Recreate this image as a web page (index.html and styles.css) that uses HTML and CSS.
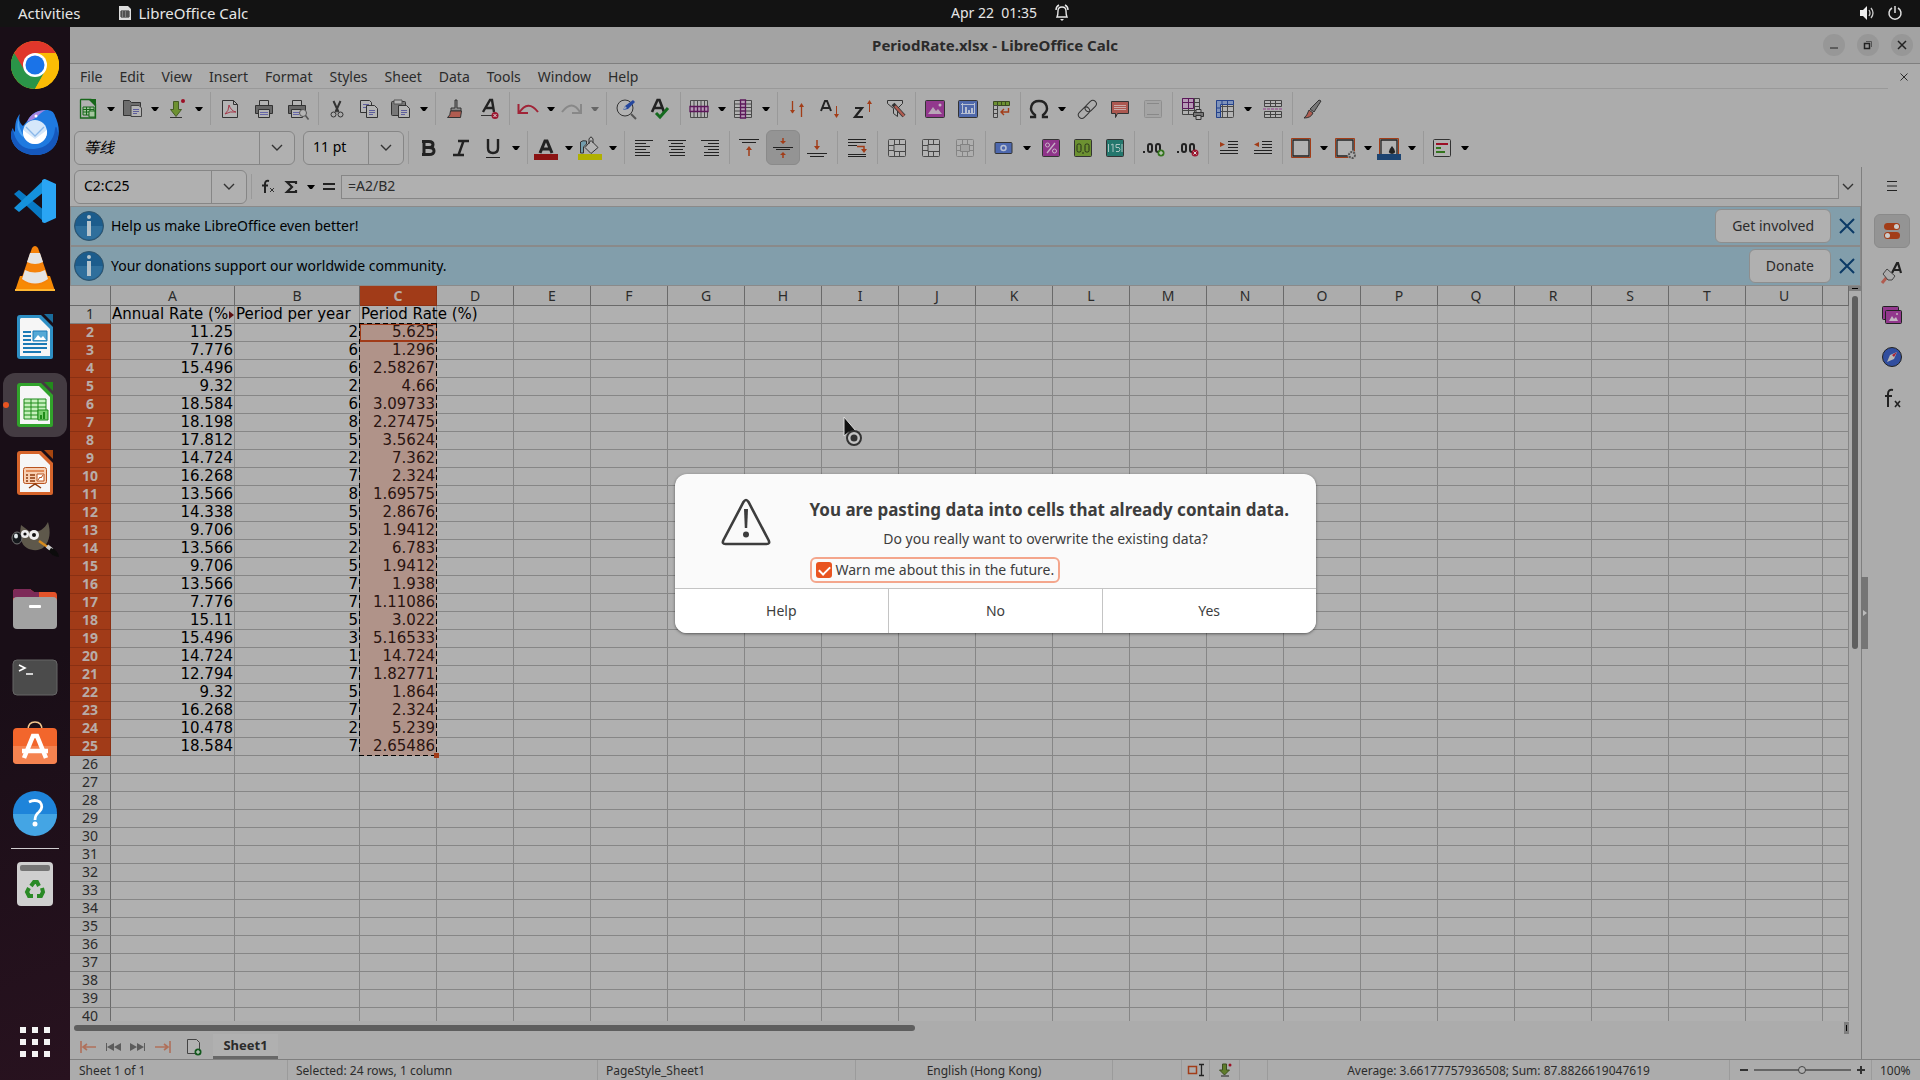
FILE: index.html
```html
<!DOCTYPE html>
<html lang="en">
<head>
<meta charset="UTF-8">
<meta name="viewport" content="width=device-width, initial-scale=1.0">
<title>PeriodRate.xlsx - LibreOffice Calc</title>
<link rel="stylesheet" href="styles.css">
</head>
<body>

<!-- shared shapes -->
<svg class="defs" aria-hidden="true">
  <symbol id="caret" viewBox="0 0 8 5"><path d="M0 0h8L5 4H3z" fill="#000"/></symbol>
  <symbol id="chevron" viewBox="0 0 12 8"><path d="M1 1l5 5 5-5" fill="none" stroke="#333" stroke-width="1.4"/></symbol>
  <symbol id="cross" viewBox="0 0 16 16"><path d="M1 1l14 14M15 1L1 15" fill="none" stroke="currentColor" stroke-width="2"/></symbol>
  <symbol id="info" viewBox="0 0 30 30"><circle cx="15" cy="15" r="14.500" fill="#1c5c8c" stroke="#31546b"/><path d="M1.500 15h27a13.500 13.500 0 0 1-27 0z" fill="#2f6f9c"/><circle cx="15" cy="6" r="2" fill="#b6c4cc"/><path d="M13 10h4v15h-4z" fill="#b6c4cc"/></symbol>
  <symbol id="grid" viewBox="0 0 24 24"><rect x="3.500" y="3.500" width="17" height="17" rx="1" fill="#b4b4b4" stroke="#4a4a4a"/><path d="M3.500 9.500h17M3.500 14.500h17M9.500 3.500v17M14.500 3.500v17" stroke="#4a4a4a" fill="none"/></symbol>
</svg>

<header class="topbar">
  <div class="topbar-left">
    <button>Activities</button>
    <button class="app-menu">
      <svg width="14" height="16" viewBox="0 0 14 16"><path d="M1 1h9l3 3v11H1z" fill="#ddd"/><path d="M3 6h8v6H3zM3 8h8M3 10h8M6 6v6M9 6v6" fill="none" stroke="#222"/></svg>
      LibreOffice Calc
    </button>
  </div>
  <button class="clock">Apr 22&nbsp; 01:35
    <svg width="16" height="18" viewBox="0 0 16 18"><path d="M3 13c1-2 1-3 1-6 0-3 2-4 4-4s4 1 4 4c0 3 0 4 1 6zM2 6c0-2 1-4 3-5M14 6c0-2-1-4-3-5" fill="none" stroke="#e8e8e8" stroke-width="1.400"/><path d="M6 15h4l-2 2z" fill="#e8e8e8"/></svg>
  </button>
  <div class="topbar-right">
    <svg width="16" height="16" viewBox="0 0 16 16"><path d="M1 5h3l4-4v14l-4-4H1z" fill="#eee"/><path d="M10 5q2 3 0 6M12 3q4 5 0 10" fill="none" stroke="#ccc" stroke-width="1.300"/></svg>
    <svg width="16" height="16" viewBox="0 0 16 16"><path d="M5 3a6 6 0 1 0 6 0M8 1v7" fill="none" stroke="#e0e0e0" stroke-width="1.500"/></svg>
  </div>
</header>

<div class="desktop">
  <nav class="dock" aria-label="Dock">
    <a href="#" aria-label="Chrome"><svg viewBox="0 0 48 48"><circle cx="24" cy="24" r="24" fill="#fbbc05"/><path d="M24 24L3.200 12A24 24 0 0 0 24 48l10-18z" fill="#2a9548"/><path d="M3.200 12A24 24 0 0 1 44.800 12H24L14 30z" fill="#e0372b"/><path d="M24 12h20.800A24 24 0 0 1 24 48l10.400-18z" fill="#fbbc05"/><circle cx="24" cy="24" r="12" fill="#fff"/><circle cx="24" cy="24" r="9.500" fill="#1a73e8"/></svg></a>
    <a href="#" aria-label="Thunderbird"><svg viewBox="0 0 48 48"><path d="M9 5c-2 6 0 9 3 12l5-6c3-6 9-10 18-10 5 0 8 2 9 6 3 6 5 14 3 22-2 10-11 17-22 17C11 46 1 38 0 27c0-4 1-7 2-8 0 2 1 3 2 4 0-8 1-14 5-18z" fill="#1f7ae0"/><path d="M2 20c2 14 11 21 21 20 12-1 20-8 21-20 1-5 2-1 3 4 1 13-9 22-22 22C11 46 0 37 0 26c0-3 1-5 2-6z" fill="#1558bd"/><path d="M8 9c-1 9 3 15 6 20-6-3-10-11-6-20z" fill="#4ba3f5"/><path d="M16 13c3-8 11-12 19-12-6 2-9 9-17 11z" fill="#a385e0"/><circle cx="25" cy="7" r="1.500" fill="#fff"/><circle cx="24" cy="23" r="12" fill="#d5e7fa"/><path d="M12 21l12 9 12-9c1 8-5 14-12 14s-13-6-12-14z" fill="#fff"/><path d="M15 18l9 9 9-9" fill="none" stroke="#8ab8ea" stroke-width="1.300"/></svg></a>
    <a href="#" aria-label="VS Code"><svg viewBox="0 0 48 48"><path d="M3 17l5-4 26 21v12z" fill="#0879c4"/><path d="M3 31l5 4 26-21V2z" fill="#1592dc"/><path d="M34 2l11 5v34l-11 5c-2 0-3-1-3-2V4c0-1 1-2 3-2z" fill="#2aa5f4"/></svg></a>
    <a href="#" aria-label="VLC"><svg viewBox="0 0 48 48"><path d="M9 31h30l5 15H4z" fill="#f78a05"/><path d="M4 44h40v2H4z" fill="#ffb733"/><path d="M21 3q3-4 6 0l11 32q-14 11-28 0z" fill="#f5820a"/><path d="M19 8h10l3 9q-8 4-16 0z" fill="#e4e4e4"/><path d="M14 25q10 5 20 0l3 9q-13 9-26 0z" fill="#e4e4e4"/></svg></a>
    <a href="#" aria-label="Writer"><svg viewBox="0 0 48 48"><path d="M9 2h21l12 12v30q0 2-2 2H9q-3 0-3-3V5q0-3 3-3z" fill="#2e8fc4"/><path d="M10 5h18l11 11v27H9V6z" fill="#f6f6f6"/><path d="M33 1h9v9z" fill="#1a6c9c"/><path d="M12 19h8M12 23h8M12 27h8M12 31h24M12 35h24M12 39h18" stroke="#1c7ab5" stroke-width="2"/><path d="M22 18h14v10H22z" fill="#55a9d6" stroke="#1c7ab5"/><path d="M23 27l4-5 3 3 2-2 3 4z" fill="#fff"/></svg></a>
    <a href="#" class="running" aria-label="Calc"><svg viewBox="0 0 48 48"><path d="M9 2h21l12 12v30q0 2-2 2H9q-3 0-3-3V5q0-3 3-3z" fill="#31a32b"/><path d="M10 5h18l11 11v27H9V6z" fill="#f6f6f6"/><path d="M33 1h9v9z" fill="#228a1c"/><path d="M13 18h22v20H13z" fill="#c5f0bc" stroke="#1d8a18"/><path d="M13 22h22M13 26h22M13 30h22M13 34h22M20 18v20M27 18v20" stroke="#1d8a18"/><path d="M27 29h10v10H27z" fill="#79cf6e" stroke="#1d8a18"/><path d="M29 38v-4h2v4zM32 38v-7h2v7z" fill="#1d8a18"/></svg></a>
    <a href="#" aria-label="Impress"><svg viewBox="0 0 48 48"><path d="M9 2h21l12 12v30q0 2-2 2H9q-3 0-3-3V5q0-3 3-3z" fill="#d5642b"/><path d="M10 5h18l11 11v27H9V6z" fill="#f6f6f6"/><path d="M33 1h9v9z" fill="#a5450f"/><rect x="12.500" y="18.500" width="23" height="16" rx="2" fill="#f8cfb2" stroke="#b85420"/><path d="M15 22h18" stroke="#e08a58" stroke-width="2"/><path d="M15 26h2M15 29h2M15 32h2M19 26h5M19 29h5M19 32h5" stroke="#8d3a0c" stroke-width="1.500"/><path d="M26 25h7v7h-7zM27 31l2-3 1 1 2-3" fill="#fff" stroke="#b85420"/><path d="M18 39l6-4 6 4" fill="none" stroke="#8d3a0c" stroke-width="1.500"/></svg></a>
    <a href="#" aria-label="GIMP"><svg viewBox="0 0 48 48"><path d="M10 8l8 6c6 2 14 1 19-9 3 10 2 19-4 25-4 4-12 4-17 1-6-3-8-12-6-23z" fill="#5e584b"/><ellipse cx="6" cy="21" rx="5" ry="6" fill="#15181c" stroke="#777"/><ellipse cx="5" cy="19" rx="2" ry="2.500" fill="#dfe6ea"/><circle cx="14" cy="17" r="4" fill="#eee"/><circle cx="14" cy="17" r="1.600" fill="#111"/><circle cx="23" cy="18" r="5" fill="#eee"/><circle cx="23" cy="18" r="2" fill="#111"/><path d="M28 24l10 7" stroke="#d68a1e" stroke-width="2.500"/><path d="M36 29l5 4" stroke="#ccc" stroke-width="4"/><path d="M40 31q7 2 8 9-8-1-10-6z" fill="#0c0c0c"/></svg></a>
    <a href="#" aria-label="Files"><svg viewBox="0 0 48 48"><path d="M2 12V7q0-3 3-3h14l4 3h20q3 0 3 4v6H2z" fill="#e3532a"/><path d="M2 12V7q0-3 3-3h14l4 3h5v6H2z" fill="#7d2a58"/><rect x="2" y="12" width="44" height="32" rx="4" fill="#a2a2a2"/><rect x="18" y="20" width="12" height="3" rx="1" fill="#fff"/></svg></a>
    <a href="#" aria-label="Terminal"><svg viewBox="0 0 48 48"><rect x="2" y="7" width="44" height="35" rx="4" fill="#4b4b4b" stroke="#666"/><path d="M8 12l6 3-6 3M15 21h7" fill="none" stroke="#fff" stroke-width="1.600"/></svg></a>
    <a href="#" aria-label="Software"><svg viewBox="0 0 48 48"><path d="M17 9q0-8 7-8t7 8" fill="none" stroke="#f3c78f" stroke-width="1.600"/><rect x="2" y="7" width="44" height="36" rx="4" fill="#f2662c"/><path d="M2 25h44v14q0 4-4 4H6q-4 0-4-4z" fill="#f58350"/><path d="M13 37l9-22h4l9 22M11 30h26" fill="none" stroke="#fff" stroke-width="4.500"/></svg></a>
    <a href="#" aria-label="Help"><svg viewBox="0 0 48 48"><circle cx="24" cy="24" r="22" fill="#1e84da"/><path d="M2 25h44a22 22 0 0 1-44 0z" fill="#44a5e4"/><path d="M18 13q6-3 11 0 4 5-1 10-4 3-4 8" fill="none" stroke="#fff" stroke-width="2.800"/><circle cx="24" cy="35" r="2.500" fill="#fff"/></svg></a>
    <hr>
    <a href="#" aria-label="Trash"><svg viewBox="0 0 48 48"><rect x="6" y="2" width="36" height="44" rx="4" fill="#cfcfcf"/><rect x="9" y="5" width="30" height="6" rx="2" fill="#757575"/><g fill="none" stroke="#2a8a26" stroke-width="4"><path d="M20 26l3-4h3l2 4M31 28l1 4-2 4h-4M22 36h-4l-2-4 2-4"/></g></svg></a>
    <a href="#" class="show-apps" aria-label="Show Applications"><svg viewBox="0 0 48 48" fill="#f4f4f4"><path d="M9 9h6v6H9zM21 9h6v6h-6zM33 9h6v6h-6zM9 21h6v6H9zM21 21h6v6h-6zM33 21h6v6h-6zM9 33h6v6H9zM21 33h6v6h-6zM33 33h6v6h-6z"/></svg></a>
  </nav>

  <div class="window">
    <div class="titlebar">
      <h1>PeriodRate.xlsx - LibreOffice Calc</h1>
      <div class="win-buttons">
        <button aria-label="Minimize"><svg viewBox="0 0 22 22"><path d="M7 14h8" stroke="#222"/></svg></button>
        <button aria-label="Restore"><svg viewBox="0 0 22 22"><path d="M7.500 9.500h5v5h-5z" fill="none" stroke="#222" stroke-width="1.500"/><path d="M9 7.500h5.500V13" fill="none" stroke="#555"/></svg></button>
        <button aria-label="Close"><svg viewBox="0 0 22 22"><path d="M7 7l8 8M15 7l-8 8" stroke="#222" stroke-width="1.500"/></svg></button>
      </div>
    </div>

    <nav class="menubar">
      <div class="menus">
        <a href="#">File</a><a href="#">Edit</a><a href="#">View</a><a href="#">Insert</a><a href="#">Format</a><a href="#">Styles</a><a href="#">Sheet</a><a href="#">Data</a><a href="#">Tools</a><a href="#">Window</a><a href="#">Help</a>
      </div>
      <button aria-label="Close document"><svg width="8" height="8"><use href="#cross"/></svg></button>
    </nav>

    <div class="toolbar">
      <button class="split" aria-label="New"><svg class="icon" viewBox="0 0 24 24"><path d="M5 2.500h10l4.500 4.500v14h-15v-18z" fill="#b2b2b2" stroke="#17661a" stroke-width="1.300"/><path d="M12 2h8v8z" fill="#17661a"/><path d="M7 10h11v8H7zM7 12.500h11M7 15h11M10.500 10v8M14 10v8" fill="#a5c69f" stroke="#17661a"/><path d="M13 14h6v6h-6z" fill="#a5c69f" stroke="#17661a"/></svg><svg class="caret"><use href="#caret"/></svg></button>
      <button class="split" aria-label="Open"><svg class="icon" viewBox="0 0 24 24"><path d="M3.500 18.500v-15h6l2 2h9v13z" fill="#6d6d6d" stroke="#333"/><path d="M11 8.500h8l2.500 2.500v8.500H11z" fill="#b4b4b4" stroke="#444"/><path d="M13 12.500h6M13 14.500h6M13 16.500h4" stroke="#5d5d9c"/></svg><svg class="caret"><use href="#caret"/></svg></button>
      <button class="split" aria-label="Save"><svg class="icon" viewBox="0 0 24 24"><path d="M9.500 4.500h5v8h3l-5.500 7-5.500-7h3z" fill="#6d9131" stroke="#465c25"/><path d="M6 20.500h12" stroke="#333"/><circle cx="19" cy="4" r="2" fill="#9c1026"/></svg><svg class="caret"><use href="#caret"/></svg></button>
      <span class="sep"></span>
      <button class="wide" aria-label="Export PDF"><svg class="icon" viewBox="0 0 24 24"><path d="M4.500 3.500h11l4 4v13h-15z" fill="#b4b4b4" stroke="#333"/><path d="M15.500 3.500v4h4" fill="none" stroke="#333"/><path d="M11 8q2 6 7 7-6-1-11 2 4-3 4-9z" fill="none" stroke="#a5384a"/></svg></button>
      <button class="wide" aria-label="Print"><svg class="icon" viewBox="0 0 24 24"><path d="M7.500 8V3.500h9V8" fill="#b4b4b4" stroke="#333"/><path d="M3.500 8.500h17v8h-17z" fill="#686868" stroke="#333"/><path d="M6.500 12.500h11v8h-11z" fill="#b4b4b4" stroke="#333"/><path d="M8 15.500h8M8 17.500h8" stroke="#6666a8"/></svg></button>
      <button class="wide" aria-label="Print Preview"><svg class="icon" viewBox="0 0 24 24"><path d="M6.500 8V3.500h9V8" fill="#b4b4b4" stroke="#333"/><path d="M2.500 8.500h17v8h-17z" fill="#686868" stroke="#333"/><path d="M5.500 12.500h11v8h-11z" fill="#b4b4b4" stroke="#333"/><path d="M7 15.500h6M7 17.500h6" stroke="#6666a8"/><circle cx="17" cy="16" r="3.500" fill="#b4b4b4" stroke="#555"/><path d="M19.500 18.500l3 4" stroke="#555" stroke-width="1.600"/></svg></button>
      <span class="sep"></span>
      <button class="slim" aria-label="Cut"><svg class="icon" viewBox="0 0 24 24"><g fill="none" stroke="#333"><path d="M8.500 4l5 11M15.500 4l-5 11" stroke-width="2"/><circle cx="8.500" cy="17.500" r="2.500"/><circle cx="15.500" cy="17.500" r="2.500"/></g></svg></button>
      <button class="slim" aria-label="Copy"><svg class="icon" viewBox="0 0 24 24"><path d="M3.500 3.500h9l2 2v10h-11z" fill="#b4b4b4" stroke="#333"/><path d="M6 7.500h6M6 10.500h5" stroke="#5d5d9c"/><path d="M9.500 8.500h8l3 3v9h-11z" fill="#b4b4b4" stroke="#333"/><path d="M12 13.500h6M12 15.500h6M12 17.500h4" stroke="#5d5d9c"/></svg></button>
      <button class="split" aria-label="Paste"><svg class="icon" viewBox="0 0 24 24"><rect x="2.500" y="4.500" width="14" height="14" rx="1" fill="#777" stroke="#333"/><path d="M5 3h8v4H5z" fill="#b4b4b4" stroke="#555"/><path d="M9.500 8.500h8l3 3v9h-11z" fill="#b4b4b4" stroke="#333"/><path d="M12 13.500h6M12 15.500h6M12 17.500h4" stroke="#5d5d9c"/></svg><svg class="caret"><use href="#caret"/></svg></button>
      <span class="sep"></span>
      <button class="wide" aria-label="Clone Formatting"><svg class="icon" viewBox="0 0 24 24"><path d="M12 3h2v8h4v3H8v-3h4z" fill="#888" stroke="#333"/><path d="M7.500 14h11l-1 6.500H4.500q3-2 3-6.500z" fill="#b05c50" stroke="#333"/></svg></button>
      <button class="wide" aria-label="Clear Formatting"><svg class="icon" viewBox="0 0 24 24"><path d="M6 15l7-12h2l2 12M9 11h7" fill="none" stroke="#222" stroke-width="2.400"/><path d="M4 18.500h12" stroke="#333"/><circle cx="18" cy="18.500" r="3.500" fill="#9c1730"/><path d="M16.500 17l3 3M19.500 17l-3 3" stroke="#ddd"/></svg></button>
      <span class="sep"></span>
      <button class="split" aria-label="Undo"><svg class="icon" viewBox="0 0 24 24"><path d="M3 16Q12 2 22 15M2.500 7v9H12" fill="none" stroke="#a02437" stroke-width="2"/></svg><svg class="caret"><use href="#caret"/></svg></button>
      <button class="split faded" aria-label="Redo"><svg class="icon" viewBox="0 0 24 24"><path d="M2 15Q12 2 20 15M21 7v9h-9" fill="none" stroke="#555" stroke-width="2"/></svg><svg class="caret"><use href="#caret"/></svg></button>
      <span class="sep"></span>
      <button class="wide" aria-label="Find and Replace"><svg class="icon" viewBox="0 0 24 24"><circle cx="11" cy="11" r="8" fill="#b2b2b2" stroke="#333"/><path d="M17 17l5 5" stroke="#555" stroke-width="2"/><path d="M9 13l2-4 8-6 2 2-7 7z" fill="#25479d"/><path d="M9 13l2-4 2 2z" fill="#9da9bb"/></svg></button>
      <button class="wide" aria-label="Spelling"><svg class="icon" viewBox="0 0 24 24"><path d="M4 15L9.500 3h2L16 15M6 11h9" fill="none" stroke="#222" stroke-width="2.600"/><path d="M8 16l4 4 8-9" fill="none" stroke="#146a1e" stroke-width="3"/></svg></button>
      <span class="sep"></span>
      <button class="split" aria-label="Row"><svg class="icon" viewBox="0 0 24 24"><path d="M3.500 3.500h17v17h-17zM7 3.500v17M10.500 3.500v17M14 3.500v17M17.500 3.500v17" fill="#b4b4b4" stroke="#4a4a4a"/><path d="M3 9.500h18v5H3zM7 9.500v5M10.500 9.500v5M14 9.500v5M17.500 9.500v5" fill="#b69bb6" stroke="#5b1759" stroke-width="1.300"/></svg><svg class="caret"><use href="#caret"/></svg></button>
      <button class="split" aria-label="Column"><svg class="icon" viewBox="0 0 24 24"><path d="M3.500 3.500h17v17h-17zM3.500 7h17M3.500 10.500h17M3.500 14h17M3.500 17.500h17" fill="#b4b4b4" stroke="#4a4a4a"/><path d="M9.500 3v18h5V3zM9.500 7h5M9.500 10.500h5M9.500 14h5M9.500 17.500h5" fill="#b69bb6" stroke="#5b1759" stroke-width="1.300"/></svg><svg class="caret"><use href="#caret"/></svg></button>
      <span class="sep"></span>
      <button aria-label="Sort"><svg class="icon" viewBox="0 0 24 24"><path d="M7.500 4v12M16.500 20V8" stroke="#a23d18" stroke-width="1.300"/><path d="M5 13h5l-2.500 3.500zM14 10h5l-2.500-4z" fill="#a23d18"/></svg></button>
      <button aria-label="Sort Ascending"><svg class="icon" viewBox="0 0 24 24"><path d="M3 14L7 4h2l4 10M4 11h7" fill="none" stroke="#222" stroke-width="2"/><path d="M18.500 9v10" stroke="#a23d18"/><path d="M16 17h5l-2.500 4z" fill="#a23d18"/></svg></button>
      <button aria-label="Sort Descending"><svg class="icon" viewBox="0 0 24 24"><path d="M4 11h7l-7 9h8" fill="none" stroke="#222" stroke-width="2.200"/><path d="M18.500 5v10" stroke="#a23d18"/><path d="M16 7h5l-2.500-4z" fill="#a23d18"/></svg></button>
      <button aria-label="AutoFilter"><svg class="icon" viewBox="0 0 24 24"><path d="M3.500 3.500h15v3l-5 5v8l-4-3v-5l-6-5z" fill="#b2b2b2" stroke="#333"/><path d="M9 7l11 12" stroke="#333" stroke-width="4"/><path d="M11 9l9 10" stroke="#b05c50" stroke-width="2.500"/></svg></button>
      <span class="sep"></span>
      <button aria-label="Insert Image"><svg class="icon" viewBox="0 0 24 24"><rect x="2.500" y="3.500" width="19" height="17" rx="1" fill="#92388d" stroke="#333"/><path d="M5 17l5-7 3 4 2-2 4 5z" fill="#b8a6b7"/><circle cx="17" cy="8" r="1.500" fill="#c3b5c2"/></svg></button>
      <button aria-label="Insert Chart"><svg class="icon" viewBox="0 0 24 24"><rect x="2.500" y="3.500" width="19" height="17" rx="1" fill="#5069ab" stroke="#333"/><path d="M6.500 6v11M5 16.500h14M5 7.500h14M18.500 6v11" stroke="#b7bfd1" fill="none"/><path d="M9 10h2v6H9zM12 13h2v3h-2zM15 11h2v5h-2z" fill="#b7bfd1"/></svg></button>
      <button aria-label="Pivot Table"><svg class="icon" viewBox="0 0 24 24"><path d="M4.500 4.500h16v4h-16zM8.500 4.500v4M12.500 4.500v4M16.500 4.500v4" fill="#6c9131" stroke="#3b4a22"/><path d="M4.500 8.500h4v12h-4zM4.500 12.500h4M4.500 16.500h4" fill="#b2b2b2" stroke="#444"/><path d="M19.500 11v4H12M15 12l-3 3 3 3" fill="none" stroke="#a23d18" stroke-width="1.400"/></svg></button>
      <span class="sep"></span>
      <button class="split" aria-label="Special Character"><svg class="icon" viewBox="0 0 24 24"><path d="M3 20h5v-2c-7-5-4-14 4-14s11 9 4 14v2h5" fill="none" stroke="#222" stroke-width="2.400"/></svg><svg class="caret"><use href="#caret"/></svg></button>
      <button aria-label="Hyperlink"><svg class="icon" viewBox="0 0 24 24"><g fill="none" stroke="#333"><rect x="9" y="6" width="13" height="7" rx="3.500" transform="rotate(-45 15 9)"/><rect x="2" y="12" width="13" height="7" rx="3.500" transform="rotate(-45 9 15)"/></g></svg></button>
      <button aria-label="Comment"><svg class="icon" viewBox="0 0 24 24"><path d="M3.500 4.500h17v12h-11l-2 4v-4h-4z" fill="#ac5850" stroke="#333"/><path d="M6 8.500h12M6 10.500h12M6 12.500h12" stroke="#c9aba7"/></svg></button>
      <button class="faded" aria-label="Headers and Footers"><svg class="icon" viewBox="0 0 24 24"><rect x="3.500" y="3.500" width="17" height="17" rx="1" fill="#999" stroke="#666"/><path d="M6 6.500h12M6 17.500h12" stroke="#555"/></svg></button>
      <span class="sep"></span>
      <button class="wide" aria-label="Print Area"><svg class="icon" viewBox="0 0 24 24"><path d="M2.500 1.500h17v16h-17zM2.500 5.500h17M2.500 9.500h17M2.500 13.500h17M8.500 1.500v16M14.500 1.500v16" fill="#b2b2b2" stroke="#444"/><path d="M2.500 1.500h11v10h-11zM2.500 5.500h11M8.500 1.500v10" fill="#b69bb6" stroke="#5b1759"/><path d="M13.500 15.500h10v4h-10z" fill="#777" stroke="#333"/><path d="M16 12.500h5v3h-5zM16 18.500h5v4h-5z" fill="#b4b4b4" stroke="#333"/></svg></button>
      <button class="split" aria-label="Freeze"><svg class="icon" viewBox="0 0 24 24"><use href="#grid"/><path d="M3.500 3.500h17v4h-13v13h-4zM9 3.500v4M14.500 3.500v4M3.500 11h4M3.500 15.500h4" fill="#7f93ba" stroke="#24428c"/></svg><svg class="caret"><use href="#caret"/></svg></button>
      <button aria-label="Split Window"><svg class="icon" viewBox="0 0 24 24"><path d="M3.500 3.500h17v6h-17zM3.500 6.500h17M9.500 3.500v6M14.500 3.500v6M3.500 14.500h17v6h-17zM3.500 17.500h17M9.500 14.500v6M14.500 14.500v6" fill="#b4b4b4" stroke="#444"/><path d="M2 12h20" stroke="#93408e" stroke-dasharray="3 1"/></svg></button>
      <span class="sep"></span>
      <button aria-label="Draw Functions"><svg class="icon" viewBox="0 0 24 24"><path d="M10 12l9-9 2 1-7 11z" fill="#777" stroke="#333"/><path d="M9 13l4 3q-2 5-9 5 3-2 5-8z" fill="#b05c50" stroke="#333"/></svg></button>
    </div>

    <div class="toolbar">
      <div class="combo font-name"><select aria-label="Font Name"><option>等线</option></select><span><svg width="12" height="8"><use href="#chevron"/></svg></span></div>
      <div class="combo font-size"><select aria-label="Font Size"><option>11 pt</option></select><span><svg width="12" height="8"><use href="#chevron"/></svg></span></div>
      <span class="sep"></span>
      <button aria-label="Bold"><svg class="icon" viewBox="0 0 24 24"><path d="M6 5.500h7q4 0 4 3t-4 3H7.500M13 11.500q5 0 5 3.500t-5 3.500H6M8 5v14" fill="none" stroke="#222" stroke-width="3"/></svg></button>
      <button aria-label="Italic"><svg class="icon" viewBox="0 0 24 24"><path d="M9 5h11M4 19h11M14.500 5l-5 14" fill="none" stroke="#222" stroke-width="2.400"/></svg></button>
      <button class="split" aria-label="Underline"><svg class="icon" viewBox="0 0 24 24"><path d="M7 3v9q0 5 5 5t5-5V3" fill="none" stroke="#222" stroke-width="2.400"/><path d="M5 21.500h14" stroke="#222"/></svg><svg class="caret"><use href="#caret"/></svg></button>
      <span class="sep"></span>
      <button class="split" aria-label="Font Color"><svg class="icon" viewBox="0 0 24 24"><path d="M6 17l5-12h2l5 12M8 13h8" fill="none" stroke="#222" stroke-width="3"/><path d="M0 18h24v6H0z" fill="#8b1313"/></svg><svg class="caret"><use href="#caret"/></svg></button>
      <button class="split" aria-label="Background Color"><svg class="icon" viewBox="0 0 24 24"><path d="M2.500 17V6q2-2 6-1v3l-3 3v6z" fill="#739dad" stroke="#333"/><path d="M13 4.500l7 7-7 6-6-6zM11 8V3q2-4 4 0v4" fill="#b4b4b4" stroke="#333"/><path d="M0 18h24v6H0z" fill="#b0b000"/></svg><svg class="caret"><use href="#caret"/></svg></button>
      <span class="sep"></span>
      <button aria-label="Align Left"><svg class="icon lines" viewBox="0 0 24 24"><path d="M3 4.500h18M3 7.500h11M3 10.500h15M3 13.500h11M3 16.500h15M3 19.500h15"/></svg></button>
      <button aria-label="Align Center"><svg class="icon lines" viewBox="0 0 24 24"><path d="M3 4.500h18M6 7.500h12M4 10.500h16M6 13.500h12M4 16.500h16M5 19.500h15"/></svg></button>
      <button aria-label="Align Right"><svg class="icon lines" viewBox="0 0 24 24"><path d="M3 4.500h18M10 7.500h11M6 10.500h15M10 13.500h11M6 16.500h15M6 19.500h15"/></svg></button>
      <span class="sep"></span>
      <button class="wide" aria-label="Align Top"><svg class="icon lines" viewBox="0 0 24 24"><path d="M2 3.500h20M5 6.500h14"/><path d="M12 20v-6" class="arrow"/><path d="M9 14h6l-3-4z" class="arrow-head"/></svg></button>
      <button class="wide pressed" aria-label="Center Vertically"><svg class="icon lines" viewBox="0 0 24 24"><path d="M2 11.500h20M5 13.500h14"/><path d="M12 2v3M12 22v-3" class="arrow"/><path d="M9 5h6l-3 3zM9 19h6l-3-3z" class="arrow-head"/></svg></button>
      <button class="wide" aria-label="Align Bottom"><svg class="icon lines" viewBox="0 0 24 24"><path d="M2 17.500h20M5 20.500h14"/><path d="M12 4v6" class="arrow"/><path d="M9 10h6l-3 4z" class="arrow-head"/></svg></button>
      <span class="sep"></span>
      <button class="wide" aria-label="Wrap Text"><svg class="icon lines" viewBox="0 0 24 24"><path d="M3 3.500h18M3 6.500h18M3 9.500h9M3 18.500h18M3 20.500h18"/><path d="M12 10.500h7v3" class="arrow"/><path d="M16 13h6l-3 4z" class="arrow-head"/></svg></button>
      <span class="sep"></span>
      <button class="wide" aria-label="Merge and Center"><svg class="icon" viewBox="0 0 24 24"><use href="#grid"/><path d="M9 8.500h11.500v7H9z" fill="#b0b0b0" stroke="#444"/></svg></button>
      <button class="wide" aria-label="Merge Cells"><svg class="icon" viewBox="0 0 24 24"><use href="#grid"/><path d="M9 8.500h11.500v7H9z" fill="#b0b0b0" stroke="#444"/></svg></button>
      <button class="wide faded" aria-label="Unmerge Cells"><svg class="icon" viewBox="0 0 24 24"><use href="#grid"/><path d="M7.500 8.500h9v7h-9z" fill="#999" stroke="#444"/></svg></button>
      <span class="sep"></span>
      <button class="split" aria-label="Currency"><svg class="icon" viewBox="0 0 24 24"><rect x="3" y="6.500" width="17" height="11" rx="1" fill="#4d68ae" stroke="#333"/><circle cx="11.500" cy="12" r="2.500" fill="none" stroke="#b7bfd1" stroke-width="1.500"/></svg><svg class="caret"><use href="#caret"/></svg></button>
      <button class="slim" aria-label="Percent"><svg class="icon" viewBox="0 0 24 24"><rect x="3.500" y="3.500" width="17" height="17" rx="1" fill="#8f348a" stroke="#333"/><path d="M16 7L8 17" stroke="#c6b2c5" stroke-width="1.300"/><g fill="none" stroke="#c6b2c5"><circle cx="8.500" cy="9" r="2"/><circle cx="15.500" cy="15" r="2"/></g></svg></button>
      <button class="slim" aria-label="Number"><svg class="icon" viewBox="0 0 24 24"><rect x="3.500" y="3.500" width="17" height="17" rx="1" fill="#6c9131" stroke="#333"/><rect x="6" y="8" width="4" height="8" rx="1.500" fill="none" stroke="#26301a"/><rect x="14" y="8" width="4" height="8" rx="1.500" fill="none" stroke="#26301a"/><path d="M12 16v2" stroke="#26301a"/></svg></button>
      <button class="slim" aria-label="Date"><svg class="icon" viewBox="0 0 24 24"><rect x="3.500" y="3.500" width="17" height="17" rx="1" fill="#24776d" stroke="#333"/><path d="M5.500 8v8M8 9l2-1v8M17 8.500h-4v3q4-1 4 2t-4 2M19 8v8" fill="none" stroke="#abc5c2"/></svg></button>
      <span class="sep"></span>
      <button class="wide" aria-label="Add Decimal Place"><svg class="icon" viewBox="0 0 24 24"><path d="M1 15h2v2H1z" fill="#222"/><rect x="6" y="8" width="4" height="8" rx="2" fill="none" stroke="#222" stroke-width="2"/><rect x="14" y="8" width="4" height="8" rx="2" fill="none" stroke="#222" stroke-width="2"/><circle cx="19" cy="17" r="3.500" fill="#34751e"/><path d="M17 17h4M19 15v4" stroke="#ddd"/></svg></button>
      <button class="wide" aria-label="Delete Decimal Place"><svg class="icon" viewBox="0 0 24 24"><path d="M1 15h2v2H1z" fill="#222"/><rect x="6" y="8" width="4" height="8" rx="2" fill="none" stroke="#222" stroke-width="2"/><rect x="14" y="8" width="4" height="8" rx="2" fill="none" stroke="#222" stroke-width="2"/><circle cx="19" cy="17" r="3.500" fill="#9c1730"/><path d="M17.500 15.500l3 3M20.500 15.500l-3 3" stroke="#ddd"/></svg></button>
      <span class="sep"></span>
      <button class="wide" aria-label="Increase Indent"><svg class="icon lines" viewBox="0 0 24 24"><path d="M12 5.500h10M12 8.500h10M12 11.500h10M4 14.500h18M4 17.500h18"/><path d="M4 6v5l5-2.500z" class="arrow-head"/></svg></button>
      <button class="wide" aria-label="Decrease Indent"><svg class="icon lines" viewBox="0 0 24 24"><path d="M12 5.500h10M12 8.500h10M12 11.500h10M4 14.500h18M4 17.500h18"/><path d="M9 6v5L4 8.500z" class="arrow-head"/></svg></button>
      <span class="sep"></span>
      <button class="split" aria-label="Borders"><svg class="icon" viewBox="0 0 24 24"><path d="M2.500 2.500h19v19h-19z" fill="none" stroke="#a23d18"/><path d="M4 4h16v16H4z" fill="#b2b2b2" stroke="#222" stroke-width="1.300"/></svg><svg class="caret"><use href="#caret"/></svg></button>
      <button class="split" aria-label="Border Style"><svg class="icon" viewBox="0 0 24 24"><path d="M2.500 2.500h19v19h-19z" fill="none" stroke="#a23d18"/><path d="M4 4h16v16H4z" fill="#b2b2b2" stroke="#222" stroke-width="1.300"/><circle cx="19" cy="19" r="4.500" fill="#acacac"/><circle cx="19" cy="19" r="3" fill="none" stroke="#555" stroke-width="2" stroke-dasharray="2 1"/></svg><svg class="caret"><use href="#caret"/></svg></button>
      <button class="split" aria-label="Border Color"><svg class="icon" viewBox="0 0 24 24"><path d="M2.500 2.500h19v19h-19z" fill="none" stroke="#a23d18"/><path d="M4 4h16v16H4z" fill="#b2b2b2" stroke="#222" stroke-width="1.300"/><path d="M15 10q6 7 0 8-6-1 0-8z" fill="#222"/><path d="M0 18h24v6H0z" fill="#1c4471"/></svg><svg class="caret"><use href="#caret"/></svg></button>
      <span class="sep"></span>
      <button class="split" aria-label="Conditional"><svg class="icon" viewBox="0 0 24 24"><rect x="3.500" y="3.500" width="17" height="17" rx="1" fill="#b2b2b2" stroke="#333"/><path d="M6 8h12" stroke="#9c1026" stroke-width="2"/><path d="M6 12h5M6 16h9" stroke="#34751e" stroke-width="2"/></svg><svg class="caret"><use href="#caret"/></svg></button>
    </div>

    <div class="main">
      <div class="document">
        <div class="formula-bar">
          <div class="combo name-box"><select aria-label="Name Box"><option>C2:C25</option></select><span><svg width="12" height="8"><use href="#chevron"/></svg></span></div>
          <span class="sep"></span>
          <button aria-label="Function Wizard"><svg class="small-icon" viewBox="0 0 16 16"><path d="M8 2q-4-1-4 3v9M1 6.500h6" fill="none" stroke="#222" stroke-width="2"/><path d="M9 9l4 4M13 9l-4 4" stroke="#333"/></svg></button>
          <button class="sum" aria-label="Select Function"><svg class="small-icon" viewBox="0 0 16 16"><path d="M13 5V3H4l5 5-5 5h9v-2" fill="none" stroke="#222" stroke-width="2.200"/></svg><svg class="caret"><use href="#caret"/></svg></button>
          <button aria-label="Formula"><svg class="small-icon" viewBox="0 0 16 16"><path d="M2 5h12M2 10h12" stroke="#222" stroke-width="2"/></svg></button>
          <input type="text" value="=A2/B2" aria-label="Input line">
          <button class="expand" aria-label="Expand Formula Bar"><svg width="12" height="8"><use href="#chevron"/></svg></button>
        </div>

        <div class="infobar">
          <svg width="30" height="30"><use href="#info"/></svg>
          <p>Help us make LibreOffice even better!</p>
          <button class="action">Get involved</button>
          <button class="dismiss" aria-label="Close Infobar"><svg width="16" height="16"><use href="#cross"/></svg></button>
        </div>
        <div class="infobar">
          <svg width="30" height="30"><use href="#info"/></svg>
          <p>Your donations support our worldwide community.</p>
          <button class="action">Donate</button>
          <button class="dismiss" aria-label="Close Infobar"><svg width="16" height="16"><use href="#cross"/></svg></button>
        </div>

        <div class="sheet-area">
          <div class="sheet">
            <table>
              <colgroup id="cols"></colgroup>
              <thead><tr id="head"></tr></thead>
              <tbody id="rows"></tbody>
            </table>
            <div class="copy-range"></div>
          </div>
          <div class="vscroll"><i></i><b></b></div>
        </div>
        <div class="hscroll"><b></b><i></i></div>

        <div class="tabs">
          <button aria-label="First Sheet"><svg class="small-icon" viewBox="0 0 16 16"><path d="M1 2v12M3 8h13M7 5L3 8l4 3" fill="none" stroke="#b0705a" stroke-width="1.600"/></svg></button>
          <button aria-label="Previous Sheet"><svg class="small-icon" viewBox="0 0 16 16"><path d="M1 4h1v8H1zM9 4v8L2 8zM16 4v8L9 8z" fill="#5c5c5c"/></svg></button>
          <button aria-label="Next Sheet"><svg class="small-icon" viewBox="0 0 16 16"><path d="M14 4h1v8h-1zM7 4v8l7-4zM0 4v8l7-4z" fill="#5c5c5c"/></svg></button>
          <button aria-label="Last Sheet"><svg class="small-icon" viewBox="0 0 16 16"><path d="M15 2v12M0 8h13M9 5l4 3-4 3" fill="none" stroke="#b0705a" stroke-width="1.600"/></svg></button>
          <button class="add-sheet" aria-label="Add Sheet"><svg width="18" height="18" viewBox="0 0 18 18"><path d="M2.500 1.500h9l3 3v11h-12z" fill="#b2b2b2" stroke="#444"/><circle cx="13" cy="14" r="3.500" fill="#14591e"/><path d="M11 14h4M13 12v4" stroke="#ddd"/></svg></button>
          <button class="tab">Sheet1</button>
        </div>
      </div>

      <aside class="sidebar">
        <div class="grip"><svg width="4" height="6" viewBox="0 0 4 6"><path d="M0 0l4 3-4 3z" fill="#bbb"/></svg></div>
        <button aria-label="Sidebar Settings"><svg class="icon" viewBox="0 0 24 24"><path d="M7 7.500h10M7 12h10M7 16.500h10" stroke="#222"/></svg></button>
        <button class="pressed" aria-label="Properties"><svg class="icon" viewBox="0 0 24 24"><rect x="4" y="4" width="16" height="7" rx="3.500" fill="#a23d18"/><circle cx="16.500" cy="7.500" r="2.500" fill="#ccc"/><rect x="4" y="13" width="16" height="7" rx="3.500" fill="#a23d18"/><circle cx="7.500" cy="16.500" r="2.500" fill="#ccc"/></svg></button>
        <button aria-label="Styles"><svg class="icon" viewBox="0 0 24 24"><path d="M12 12l5-10h1l3 10M14 9h6" fill="none" stroke="#222" stroke-width="2.200"/><path d="M2 22l5-6" stroke="#b05c50" stroke-width="3"/><path d="M3 13l4-5 8 7-3 4h-4z" fill="#acacac" stroke="#444"/></svg></button>
        <button aria-label="Gallery"><svg class="icon" viewBox="0 0 24 24"><rect x="2.500" y="3.500" width="16" height="13" rx="1" fill="#92388d" stroke="#222"/><rect x="5.500" y="7.500" width="16" height="13" rx="1" fill="#92388d" stroke="#222"/><path d="M9 18l3-5 2 3 2-2 2 4z" fill="#c3b5c2"/><circle cx="17" cy="11" r="1" fill="#c3b5c2"/></svg></button>
        <button aria-label="Navigator"><svg class="icon" viewBox="0 0 24 24"><circle cx="12" cy="12" r="9.500" fill="#314e9f" stroke="#222"/><path d="M17 7l-3 7-7 3 3-7z" fill="#b7b7b7"/><path d="M17 7l-3 5-2-2z" fill="#a52137"/></svg></button>
        <button aria-label="Functions"><svg class="icon" viewBox="0 0 24 24"><path d="M13 3q-5-1-5 4v13M5 9h7" fill="none" stroke="#222" stroke-width="2"/><path d="M15 14l5 6M20 14l-5 6" stroke="#222" stroke-width="1.600"/></svg></button>
      </aside>
    </div>

    <footer class="statusbar">
      <span>Sheet 1 of 1</span>
      <span>Selected: 24 rows, 1 column</span>
      <span>PageStyle_Sheet1</span>
      <span class="center">English (Hong Kong)</span>
      <span></span>
      <span class="mark"><svg width="18" height="14" viewBox="0 0 18 14"><path d="M1.500 3.500h8v7h-8z" fill="none" stroke="#a23d18" stroke-width="1.500"/><path d="M12 1.500h5M12 12.500h5M14.500 1v12" stroke="#222" stroke-width="1.300"/></svg></span>
      <span class="mark"><svg width="14" height="14" viewBox="0 0 14 14"><path d="M4.500 1h4v6h3l-5 5-5-5h3z" fill="#5f7d2b" stroke="#3c4f20"/><path d="M3 13h8" stroke="#222"/><circle cx="12" cy="2" r="1.500" fill="#9c1026"/></svg></span>
      <span></span>
      <span class="center">Average: 3.66177757936508; Sum: 87.8826619047619</span>
      <span class="zoom">
        <button aria-label="Zoom Out"><svg width="8" height="8"><path d="M0 4h8" stroke="#333" stroke-width="2"/></svg></button>
        <input type="range" min="0" max="100" value="49" aria-label="Zoom">
        <button aria-label="Zoom In"><svg width="8" height="8"><path d="M0 4h8M4 0v8" stroke="#333" stroke-width="2"/></svg></button>
      </span>
      <span class="percent">100%</span>
    </footer>

    <svg class="pointer" width="24" height="32" viewBox="0 0 24 32"><path d="M1 1v19l5-4 2 3 5-4z" fill="#111" stroke="#ddd"/><circle cx="11" cy="22" r="7" fill="#c4c4c4" stroke="#333" stroke-width="2"/><circle cx="11" cy="22" r="3.500" fill="#333"/></svg>

    <div class="modal">
      <form class="dialog" role="alertdialog" aria-labelledby="dialog-title">
        <div class="dialog-body">
          <svg width="50" height="50" viewBox="0 0 50 50"><path d="M22.500 4q2.500-4 5 0l20 38q2 4-2 4h-41q-4 0-2-4z" fill="none" stroke="#3d3d3d" stroke-width="2.600"/><path d="M23 11h4l-.8 19h-2.400z" fill="#3d3d3d"/><circle cx="25" cy="36.500" r="3" fill="#3d3d3d"/></svg>
          <div class="dialog-text">
            <h2 id="dialog-title">You are pasting data into cells that already contain data.</h2>
            <p>Do you really want to overwrite the existing data?</p>
            <label><input type="checkbox" checked>Warn me about this in the future.</label>
          </div>
        </div>
        <div class="dialog-buttons">
          <button type="button">Help</button>
          <button type="button">No</button>
          <button type="button">Yes</button>
        </div>
      </form>
    </div>
  </div>
</div>

<script src="sheet.js"></script>
</body>
</html>
```
FILE: styles.css
```css
* {
  box-sizing: border-box;
}

body {
  margin: 0;
  height: 100vh;
  display: flex;
  flex-direction: column;
  overflow: hidden;
  font-family: "Noto Sans", "Noto Sans CJK SC", sans-serif;
  font-size: 14px;
  color: #2b2b2b;
  background: #1b0f18;
}

button {
  border: 0;
  padding: 0;
  background: none;
  font: inherit;
  color: inherit;
}

a {
  color: inherit;
  text-decoration: none;
}

svg {
  display: block;
}

.defs {
  position: absolute;
  width: 0;
  height: 0;
}

/* top panel */
.topbar {
  display: grid;
  grid-template-columns: 1fr auto 1fr;
  align-items: center;
  height: 27px;
  padding: 0 17px 2px 18px;
  background: #131313;
  color: #e6e6e6;
}

.topbar-left,
.topbar-right,
.app-menu,
.clock {
  display: flex;
  align-items: center;
}

.topbar-left {
  gap: 37px;
  font-size: 15px;
}

.app-menu {
  gap: 7px;
}

.clock {
  gap: 17px;
  padding-left: 100px;
}

.topbar-right {
  justify-content: flex-end;
  gap: 12px;
}

.desktop {
  flex: 1;
  min-height: 0;
  display: flex;
}

/* dock */
.dock {
  width: 70px;
  padding: 4px 3px;
  display: flex;
  flex-direction: column;
  background: linear-gradient(160deg, #190e17 60%, #28121f);
}

.dock a {
  position: relative;
  height: 68px;
  display: flex;
  align-items: center;
  justify-content: center;
}

.dock svg {
  width: 48px;
  height: 48px;
}

.dock hr {
  width: 48px;
  margin: 1px auto;
  border: 0;
  border-top: 1px solid #d0cdcf;
}

.dock .running::before {
  content: "";
  position: absolute;
  inset: 2px 0;
  border-radius: 12px;
  background: #443b42;
}

.dock .running::after {
  content: "";
  position: absolute;
  left: 0;
  width: 6px;
  height: 6px;
  border-radius: 3px;
  background: #e95420;
}

.dock .running svg {
  position: relative;
}

.dock .show-apps {
  margin-top: auto;
}

/* window */
.window {
  position: relative;
  flex: 1;
  min-width: 0;
  display: flex;
  flex-direction: column;
  background: #acacac;
}

.titlebar {
  position: relative;
  height: 37px;
  display: flex;
  align-items: center;
  justify-content: center;
  background: #a3a3a3;
  border-bottom: 1px solid #7f7f7f;
}

.titlebar h1 {
  margin: 0;
  font-size: 15px;
  font-weight: bold;
}

.win-buttons {
  position: absolute;
  right: 7px;
  display: flex;
  gap: 12px;
}

.win-buttons button {
  width: 22px;
  height: 22px;
  border-radius: 50%;
  background: #979797;
}

.menubar {
  height: 25px;
  padding-right: 12px;
  display: flex;
  justify-content: space-between;
}

.menus {
  flex: 1;
  display: flex;
  align-items: center;
  gap: 17px;
  margin-right: 12px;
  padding-left: 10px;
  border-bottom: 1px solid #999;
}

.toolbar {
  height: 39px;
  padding-left: 2px;
  display: flex;
  align-items: center;
}

.toolbar button {
  width: 33px;
  height: 35px;
  display: flex;
  align-items: center;
  justify-content: center;
  border-radius: 6px;
}

.toolbar .wide {
  width: 34px;
}

.toolbar .slim {
  width: 32px;
}

.toolbar .split {
  width: 44px;
  justify-content: flex-start;
  gap: 7px;
  padding-left: 4px;
}

.split + :not(.split) {
  margin-left: 3px;
}

.faded {
  opacity: 0.4;
}

.toolbar .pressed,
.sidebar .pressed {
  background: #949494;
  border: 1px solid #8a8a8a;
}

.sep {
  width: 6px;
  height: 33px;
  background: linear-gradient(#999, #999) center / 1px 100% no-repeat;
}

.icon {
  width: 24px;
  height: 24px;
  flex: none;
}

.small-icon {
  width: 16px;
  height: 16px;
}

.caret {
  width: 8px;
  height: 5px;
  margin-top: 2px;
}

.lines path {
  fill: none;
  stroke: #222;
}

.lines .arrow {
  stroke: #a23d18;
  stroke-width: 1.5;
}

.lines .arrow-head {
  fill: #a23d18;
  stroke: none;
}

.combo {
  position: relative;
  height: 34px;
}

.combo select {
  appearance: none;
  width: 100%;
  height: 100%;
  padding: 0 40px 2px 9px;
  border: 1px solid #868686;
  border-radius: 6px;
  background: #b0b0b0;
  font: inherit;
  color: #000;
}

.combo span {
  position: absolute;
  top: 1px;
  right: 1px;
  bottom: 1px;
  width: 35px;
  display: flex;
  align-items: center;
  justify-content: center;
  border-left: 1px solid #868686;
  pointer-events: none;
}

.font-name {
  width: 221px;
  margin: 0 8px 0 2px;
}

.font-name select {
  font-size: 15px;
  font-style: italic;
}

.font-size {
  width: 101px;
  margin-right: 1px;
}

.main {
  flex: 1;
  min-height: 0;
  display: flex;
  border-bottom: 1px solid #7f7f7f;
}

.document {
  flex: 1;
  min-width: 0;
  display: flex;
  flex-direction: column;
}

/* formula bar */
.formula-bar {
  flex: none;
  height: 39px;
  padding-left: 4px;
  display: flex;
  align-items: center;
}

.name-box {
  width: 173px;
  margin-right: 1px;
}

.formula-bar .sep {
  height: 25px;
}

.formula-bar button {
  width: 24px;
  display: flex;
  justify-content: center;
}

.formula-bar .sep + button {
  margin-left: 3px;
}

.formula-bar .sum {
  width: 36px;
  align-items: center;
  gap: 8px;
}

.formula-bar input {
  flex: 1;
  height: 24px;
  padding: 0 6px 2px;
  border: 1px solid #868686;
  background: #b0b0b0;
  font: inherit;
  color: #2b2b2b;
}

.formula-bar .expand {
  width: 18px;
  margin-right: 4px;
}

/* info bars */
.infobar {
  flex: none;
  height: 40px;
  padding: 0 5px 0 3px;
  display: flex;
  align-items: center;
  border: 1px solid #8a8a8a;
  background: #829eab;
  color: #000;
}

.infobar p {
  flex: 1;
  margin: 0 7px;
  padding-bottom: 2px;
}

.action {
  height: 34px;
  padding: 0 16px 2px;
  border: 1px solid #8e8e8e;
  border-radius: 6px;
  background: #b0b0b0;
  color: #2b2b2b;
}

.dismiss {
  margin-left: 8px;
  color: #0b3a66;
}

/* spreadsheet */
.sheet-area {
  flex: 1;
  min-height: 0;
  display: flex;
}

.sheet {
  position: relative;
  flex: 1;
  min-width: 0;
  overflow: hidden;
  background: #b0b0b0;
}

.sheet table {
  width: 100%;
  table-layout: fixed;
  border-collapse: separate;
  border-spacing: 0;
}

.sheet .col-head {
  width: 41px;
}

.sheet .col-a {
  width: 124px;
}

.sheet .col-b {
  width: 125px;
}

.sheet .col-n {
  width: 77px;
}

.sheet th {
  height: 18px;
  padding: 0 0 1px;
  border-right: 1px solid #6a6a6a;
  border-bottom: 1px solid #7f7f7f;
  background: #acacac;
  font-weight: normal;
  line-height: 16px;
}

.sheet thead th {
  height: 20px;
  padding: 0;
  border-bottom-color: #6a6a6a;
}

.sheet th.active {
  background: #a13b18;
  border-color: #8a3013;
  color: #b8aca8;
  font-weight: bold;
}

.sheet td {
  height: 18px;
  padding: 0 1px 1px;
  border-right: 1px solid #868686;
  border-bottom: 1px solid #868686;
  font-family: "DejaVu Sans", sans-serif;
  font-size: 15px;
  line-height: 16px;
  text-align: right;
  white-space: nowrap;
  color: #000;
}

.sheet td.text {
  text-align: left;
}

/* marker for text that runs on past the cell */
.sheet td.clipped {
  position: relative;
}

.sheet td.clipped::after {
  content: "";
  position: absolute;
  right: 0;
  top: 5px;
  border: solid transparent;
  border-width: 4px 0 4px 5px;
  border-left-color: #5c1010;
}

.sheet td.picked {
  background: #b09389;
  border-color: #b09389;
  color: #2a1410;
}

.sheet td.cursor {
  padding-bottom: 0;
  outline: 1px solid #a13b18;
  outline-offset: -1px;
  border-bottom: 2px solid #a13b18;
}

.copy-range {
  position: absolute;
  left: 289px;
  top: 37px;
  width: 78px;
  height: 433px;
  background:
    repeating-linear-gradient(90deg, #000 0 5px, transparent 5px 8px) top / 100% 1px no-repeat,
    repeating-linear-gradient(90deg, #000 0 5px, transparent 5px 8px) bottom / 100% 1px no-repeat,
    repeating-linear-gradient(#000 0 5px, transparent 5px 8px) left / 1px 100% no-repeat,
    repeating-linear-gradient(#000 0 5px, transparent 5px 8px) right / 1px 100% no-repeat;
}

.copy-range::after {
  content: "";
  position: absolute;
  right: -2px;
  bottom: -2px;
  width: 5px;
  height: 5px;
  background: #a13b18;
}

.vscroll {
  width: 12px;
  display: flex;
  flex-direction: column;
  align-items: center;
}

.vscroll i {
  width: 12px;
  height: 5px;
  margin-bottom: 5px;
  border: solid #7f7f7f;
  border-width: 2px 3px;
  background: #000;
}

.vscroll b {
  width: 6px;
  height: 48%;
  border-radius: 3px;
  background: #5e5e5e;
}

.hscroll {
  flex: none;
  height: 13px;
  padding: 0 12px 0 4px;
  display: grid;
  grid-template-columns: 9fr 10fr;
  align-items: center;
}

.hscroll b {
  height: 6px;
  border-radius: 3px;
  background: #5e5e5e;
}

.hscroll i {
  justify-self: end;
  width: 5px;
  height: 12px;
  border: solid #7f7f7f;
  border-width: 3px 2px;
  background: #000;
}

.tabs {
  flex: none;
  height: 25px;
  padding-left: 10px;
  display: flex;
  align-items: center;
  gap: 9px;
}

.tabs .add-sheet {
  margin-left: 5px;
}

.tabs .tab {
  width: 65px;
  height: 25px;
  margin-left: 1px;
  background: #b0b0b0;
  border-bottom: 3px solid #686868;
  font-size: 13px;
  font-weight: bold;
}

/* sidebar */
.sidebar {
  position: relative;
  width: 59px;
  padding: 2px 0 0 2px;
  display: flex;
  flex-direction: column;
  align-items: center;
  gap: 8px;
  border-left: 1px solid #7f7f7f;
}

.sidebar button {
  width: 36px;
  height: 34px;
  display: flex;
  align-items: center;
  justify-content: center;
  border-radius: 6px;
}

.sidebar .pressed {
  margin-top: 3px;
}

.grip {
  position: absolute;
  left: -1px;
  top: 410px;
  width: 7px;
  height: 72px;
  display: flex;
  align-items: center;
  justify-content: center;
  background: #757575;
}

/* status bar */
.statusbar {
  height: 20px;
  display: grid;
  grid-template-columns: 217fr 310fr 258fr 257fr 69px 28px 30px 28px 462fr 142px 49px;
  font-size: 12px;
  line-height: 21px;
}

.statusbar > span {
  height: 20px;
  padding-left: 8px;
  border-left: 1px solid #9b9b9b;
  white-space: nowrap;
}

.statusbar > span:first-child {
  border-left-color: transparent;
}

.statusbar .center {
  padding: 0;
  text-align: center;
}

.statusbar .mark {
  padding: 0;
  display: flex;
  align-items: center;
  justify-content: center;
}

.statusbar .zoom {
  padding-left: 10px;
  display: flex;
  align-items: center;
  gap: 6px;
}

.zoom input {
  appearance: none;
  width: 97px;
  height: 8px;
  margin: 0;
  background: linear-gradient(#666, #666) center / 100% 2px no-repeat;
}

.zoom input::-webkit-slider-thumb {
  appearance: none;
  width: 8px;
  height: 8px;
  border: 1px solid #444;
  border-radius: 50%;
  background: #b0b0b0;
}

.pointer {
  position: absolute;
  left: 773px;
  top: 389px;
}

/* dialog */
.modal {
  position: absolute;
  inset: 0;
  display: flex;
  align-items: center;
  justify-content: center;
}

.dialog {
  width: 641px;
  border-radius: 12px;
  overflow: hidden;
  background: #fafafa;
  box-shadow: 0 1px 3px rgba(0, 0, 0, 0.5);
  color: #3d3d3d;
}

.dialog-body {
  display: flex;
  gap: 39px;
  padding: 24px 34px 5px 46px;
}

.dialog-text {
  flex: 1;
  min-width: 0;
}

.dialog h2 {
  margin: 0 0 8px;
  font-size: 17px;
  line-height: 24px;
  white-space: nowrap;
}

.dialog p {
  margin: 0 0 9px;
  line-height: 18px;
  text-align: center;
}

.dialog label {
  display: inline-flex;
  align-items: center;
  gap: 4px;
  height: 26px;
  padding: 0 4px;
  border: 2px solid #f4a68c;
  border-radius: 6px;
  line-height: 18px;
}

.dialog label input {
  appearance: none;
  width: 16px;
  height: 16px;
  margin: 0;
  border-radius: 3px;
  background: #e95420;
}

.dialog label input:checked::before {
  content: "";
  display: block;
  width: 9px;
  height: 5px;
  margin: 4px 3px;
  border: solid #fff;
  border-width: 0 0 2px 2px;
  transform: rotate(-45deg);
}

.dialog-buttons {
  display: grid;
  grid-template-columns: repeat(3, 1fr);
  height: 45px;
  border-top: 1px solid #c4c4c4;
  background: #fff;
}

.dialog-buttons button {
  padding-bottom: 2px;
}

.dialog-buttons button + button {
  border-left: 1px solid #c4c4c4;
}
```
FILE: sheet.js
```js
const titles = ['Annual Rate (%', 'Period per year', 'Period Rate (%)'];
const data = [
  ['11.25', 2, '5.625'], ['7.776', 6, '1.296'], ['15.496', 6, '2.58267'],
  ['9.32', 2, '4.66'], ['18.584', 6, '3.09733'], ['18.198', 8, '2.27475'],
  ['17.812', 5, '3.5624'], ['14.724', 2, '7.362'], ['16.268', 7, '2.324'],
  ['13.566', 8, '1.69575'], ['14.338', 5, '2.8676'], ['9.706', 5, '1.9412'],
  ['13.566', 2, '6.783'], ['9.706', 5, '1.9412'], ['13.566', 7, '1.938'],
  ['7.776', 7, '1.11086'], ['15.11', 5, '3.022'], ['15.496', 3, '5.16533'],
  ['14.724', 1, '14.724'], ['12.794', 7, '1.82771'], ['9.32', 5, '1.864'],
  ['16.268', 7, '2.324'], ['10.478', 2, '5.239'], ['18.584', 7, '2.65486']
];
const letters = 'ABCDEFGHIJKLMNOPQRSTU'.split('');

let cols = '<col class="col-head"><col class="col-a"><col class="col-b">';
for (let i = 2; i < letters.length; i++) cols += '<col class="col-n">';
document.getElementById('cols').innerHTML = cols + '<col>';

document.getElementById('head').innerHTML = '<th></th>' +
  letters.map(l => `<th class="${l === 'C' ? 'active' : ''}">${l}</th>`).join('') + '<th></th>';

let html = '';
for (let r = 1; r <= 40; r++) {
  html += `<tr><th class="${r > 1 && r < 26 ? 'active' : ''}">${r}</th>`;
  for (let c = 0; c <= letters.length; c++) {
    let value = '';
    let cls = '';
    if (c < 3 && r === 1) {
      value = titles[c];
      cls = c === 0 ? 'text clipped' : 'text';
    } else if (c < 3 && r <= 25) {
      value = data[r - 2][c];
      if (c === 2) cls = r === 2 ? 'picked cursor' : 'picked';
    }
    html += `<td class="${cls}">${value}</td>`;
  }
  html += '</tr>';
}
document.getElementById('rows').innerHTML = html;
```
